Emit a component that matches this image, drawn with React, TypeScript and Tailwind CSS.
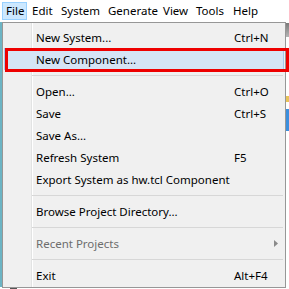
type Row =
  | { kind: "item"; label: string; shortcut?: string; disabled?: boolean; submenu?: boolean; active?: boolean }
  | { kind: "sep" }

const rows: Row[] = [
  { kind: "item", label: "New System...", shortcut: "Ctrl+N" },
  { kind: "item", label: "New Component...", active: true },
  { kind: "sep" },
  { kind: "item", label: "Open...", shortcut: "Ctrl+O" },
  { kind: "item", label: "Save", shortcut: "Ctrl+S" },
  { kind: "item", label: "Save As..." },
  { kind: "item", label: "Refresh System", shortcut: "F5" },
  { kind: "item", label: "Export System as hw.tcl Component" },
  { kind: "sep" },
  { kind: "item", label: "Browse Project Directory..." },
  { kind: "sep" },
  { kind: "item", label: "Recent Projects", disabled: true, submenu: true },
  { kind: "sep" },
  { kind: "item", label: "Exit", shortcut: "Alt+F4" },
]

const menus = [
  { label: "File", w: "w-[25px]", open: true },
  { label: "Edit", w: "w-[29px]" },
  { label: "System", w: "w-[47px]" },
  { label: "Generate", w: "w-[55px]" },
  { label: "View", w: "w-[33px]" },
  { label: "Tools", w: "w-[37px]" },
  { label: "Help", w: "w-[29px]" },
]

export default function App() {
  return (
    <div className="relative w-[289px] h-[289px] overflow-hidden bg-white text-[11.5px] text-black font-['Segoe_UI','Noto_Sans',sans-serif] leading-none">
      {/* menu bar */}
      <div className="flex h-[22px] items-center pl-[2px] bg-white">
        {menus.map((m) => (
          <div
            key={m.label}
            className={
              m.open
                ? `${m.w} h-[18px] flex items-center pl-[3px] bg-[#cce8ff] border border-[#99d1ff]`
                : `${m.w} h-[18px] flex items-center pl-[4px] border border-transparent`
            }
          >
            {m.label}
          </div>
        ))}
      </div>

      {/* window content behind the menu */}
      <div className="absolute left-0 top-[22px] w-[2px] h-[265px] bg-[#6cb4c4]" />
      <div className="absolute right-0 top-[23px] w-[3px] h-[14px] bg-gradient-to-b from-[#7a7a7a] to-[#b5b5b5]" />
      <div className="absolute right-0 top-[96px] w-[3px] h-[6px] bg-[#e8c35a]" />
      <div className="absolute right-0 top-[109px] w-[3px] h-[22px] bg-[#3c8fdd]" />

      {/* dropdown */}
      <div className="absolute left-[2px] top-[22px] w-[284px] h-[266px] border border-[#979797] bg-[#f0f0f0] pt-[3px]">
        <div className="absolute left-[28px] top-0 bottom-0 w-px bg-[#e2e3e3]" />
        <div className="absolute left-[29px] top-0 bottom-0 w-px bg-white" />
        <div className="relative flex flex-col">
          {rows.map((r, i) =>
            r.kind === "sep" ? (
              <div key={i} className="h-[10px] flex items-center pl-[29px] pr-[2px]">
                <div className="w-full h-px bg-[#d7d7d7]" />
              </div>
            ) : (
              <div
                key={i}
                className={
                  r.active
                    ? "h-[22px] mx-[1px] pt-px flex items-center whitespace-nowrap bg-[#d5e4f5] border border-[#a6c8ec]"
                    : "h-[22px] mx-[1px] pt-px flex items-center whitespace-nowrap border border-transparent"
                }
              >
                <span className={r.disabled ? "w-[229px] shrink-0 pl-[31px] text-[#6d6d6d]" : "w-[229px] shrink-0 pl-[31px]"}>
                  {r.label}
                </span>
                {r.shortcut && <span>{r.shortcut}</span>}
                {r.submenu && (
                  <svg width="4" height="7" viewBox="0 0 4 7" className="ml-auto mr-[5px]">
                    <polygon points="0,0 4,3.5 0,7" fill="#8a8a8a" />
                  </svg>
                )}
              </div>
            )
          )}
        </div>
      </div>

      {/* red annotation box */}
      <div className="absolute left-[5px] top-[48px] w-[284px] h-[24px] border-[3px] border-[#ee0000]" />

      {/* bottom edge of window */}
      <div className="absolute left-[10px] bottom-0 w-[7px] h-px bg-[#555]" />
    </div>
  )
}
